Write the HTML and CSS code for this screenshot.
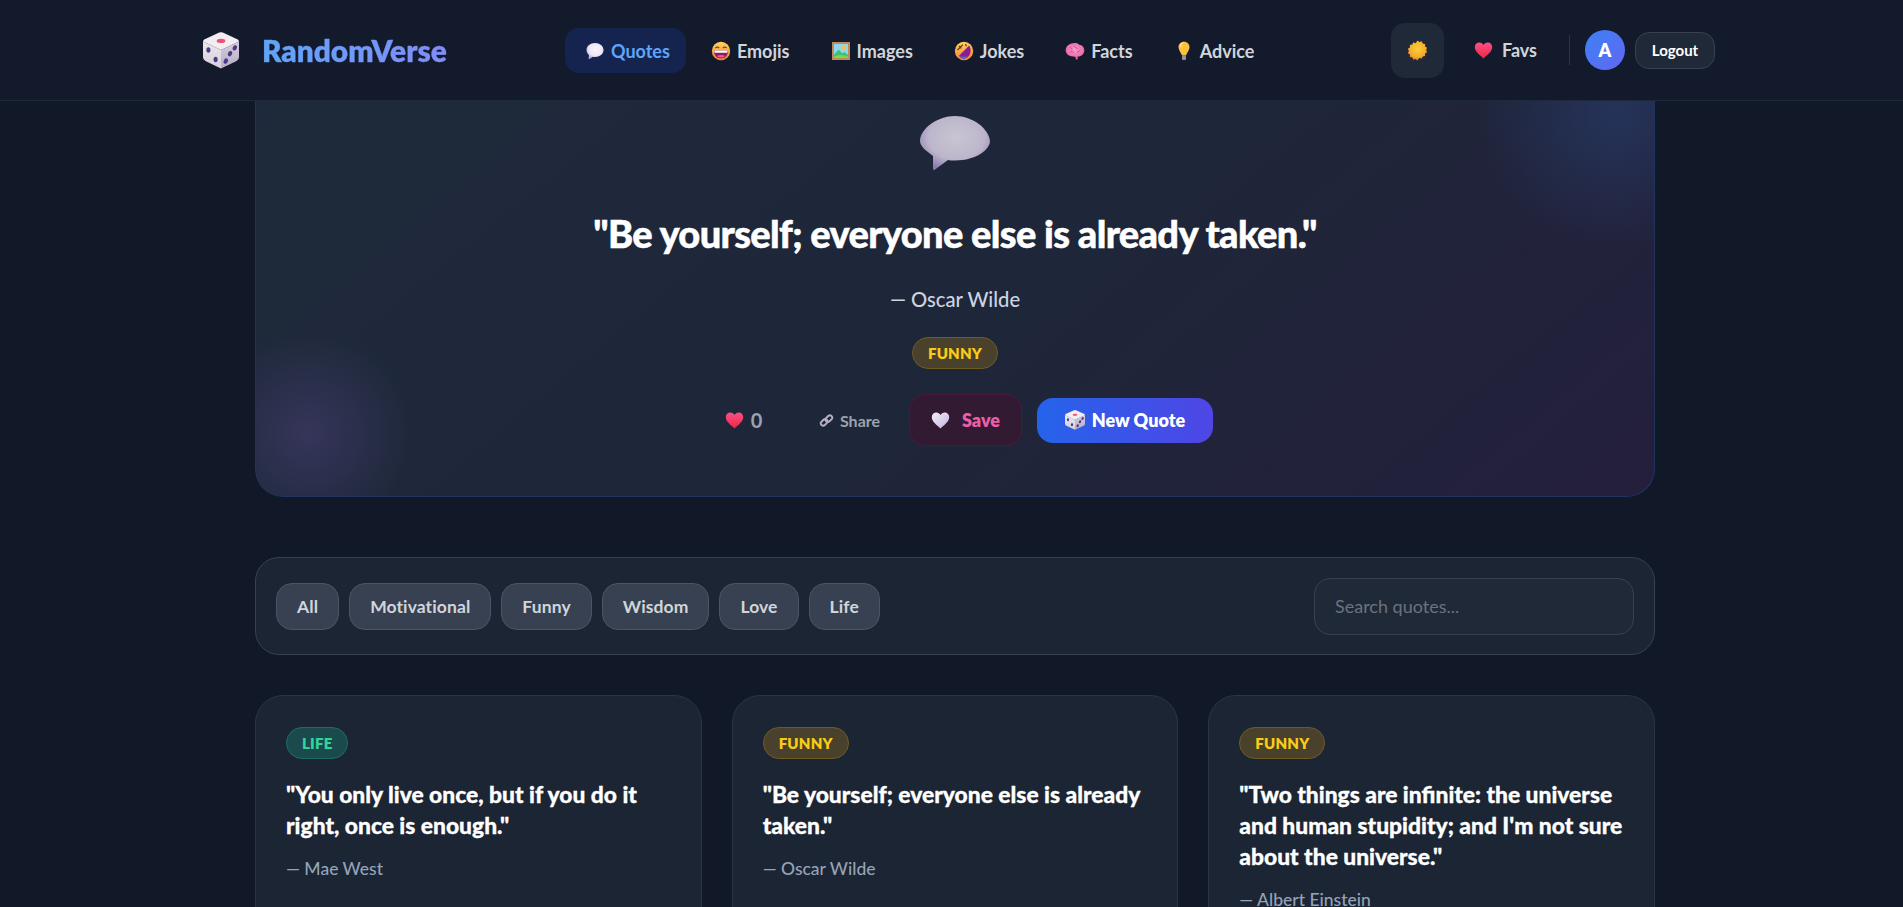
FILE: index.html
```html
<!DOCTYPE html>
<html lang="en">
<head>
<meta charset="utf-8">
<title>RandomVerse</title>
<link rel="stylesheet" href="styles.css">
</head>
<body>
<svg class="defs" width="0" height="0" aria-hidden="true">
  <defs>
    <linearGradient id="gHeart" x1="0" y1="0" x2="0" y2="1"><stop offset="0" stop-color="#f8508a"/><stop offset="1" stop-color="#f0263f"/></linearGradient>
    <linearGradient id="gHeartW" x1="0" y1="0" x2="1" y2="1"><stop offset="0" stop-color="#f3eef6"/><stop offset="1" stop-color="#c4b3e4"/></linearGradient>
    <radialGradient id="gBubble" cx=".52" cy=".4" r=".62"><stop offset="0" stop-color="#c9c5d2"/><stop offset=".65" stop-color="#bdb6cb"/><stop offset="1" stop-color="#8d7bb0"/></radialGradient>
    <radialGradient id="gBubbleS" cx=".55" cy=".4" r=".6"><stop offset="0" stop-color="#f7f3fb"/><stop offset=".7" stop-color="#ece6f4"/><stop offset="1" stop-color="#b9a6dc"/></radialGradient>
    <linearGradient id="gFace" x1="0" y1="0" x2="0" y2="1"><stop offset="0" stop-color="#ffd35a"/><stop offset="1" stop-color="#f5803a"/></linearGradient>
    <radialGradient id="gSun" cx=".5" cy=".4" r=".55"><stop offset="0" stop-color="#fbcf3a"/><stop offset=".8" stop-color="#f3ab2b"/><stop offset="1" stop-color="#ea8228"/></radialGradient>
    <radialGradient id="gBrain" cx=".5" cy=".4" r=".6"><stop offset="0" stop-color="#f79ac6"/><stop offset="1" stop-color="#e860a4"/></radialGradient>
    <linearGradient id="gDieL" x1="0" y1="0" x2="0" y2="1"><stop offset="0" stop-color="#ece7ec"/><stop offset="1" stop-color="#d6cfdc"/></linearGradient>
    <linearGradient id="gDieR" x1="0" y1="0" x2="0" y2="1"><stop offset="0" stop-color="#d6cede"/><stop offset="1" stop-color="#b7abc8"/></linearGradient>
    <symbol id="iHeart" viewBox="0 0 24 24"><path d="M12 22C7 17.500 1 13.500 1 8c0-3.500 2.600-6 5.700-6C9 2 11 3.200 12 5c1-1.800 3-3 5.300-3C20.400 2 23 4.500 23 8c0 5.500-6 9.500-11 14z" fill="url(#gHeart)"/></symbol>
    <symbol id="iHeartW" viewBox="0 0 24 24"><path d="M12 22C7 17.500 1 13.500 1 8c0-3.500 2.600-6 5.700-6C9 2 11 3.200 12 5c1-1.800 3-3 5.300-3C20.400 2 23 4.500 23 8c0 5.500-6 9.500-11 14z" fill="url(#gHeartW)"/></symbol>
    <symbol id="iDie" viewBox="3 1 30 35" preserveAspectRatio="none">
      <path d="M16.500 1.500Q18 .8 19.500 1.500L32 8Q33 8.800 33 10L18 18 3 10Q3 8.800 4 8z" fill="#f1edf0"/>
      <path d="M3 10 18 18V35.500L5 28.500Q3 27.500 3 25z" fill="url(#gDieL)"/>
      <path d="M33 10 18 18V35.500L31 28.500Q33 27.500 33 25z" fill="url(#gDieR)"/>
      <ellipse cx="18" cy="9.500" rx="3.600" ry="2" fill="#f0527a"/>
      <ellipse cx="7.500" cy="18" rx="1.700" ry="2.600" fill="#4b3a86"/>
      <ellipse cx="13.500" cy="27" rx="1.700" ry="2.600" fill="#4b3a86"/>
      <ellipse cx="29.500" cy="16" rx="1.700" ry="2.600" transform="rotate(18 29.500 16)" fill="#4b3a86"/>
      <ellipse cx="25.500" cy="21.500" rx="1.700" ry="2.600" transform="rotate(18 25.500 21.500)" fill="#4b3a86"/>
      <ellipse cx="22" cy="28.500" rx="1.700" ry="2.600" transform="rotate(18 22 28.500)" fill="#4b3a86"/>
    </symbol>
    <symbol id="iBubble" viewBox="0 0 72 56"><path d="M36 1C54 1 70 14 71 26 71 34 58 45.500 36 45.500 33 45.500 31 45.500 29 45L16 54.500Q14 56 14 53V41C6 35 1 31 1 26 1 14 18 1 36 1z" fill="url(#gBubble)"/></symbol>
    <symbol id="iBubbleS" viewBox="0 0 20 20"><path d="M10 2c4.800 0 8.500 3 8.500 7s-3.700 7-8.500 7c-.8 0-1.500-.1-2.200-.3L4.500 18c-.6.3-1-.1-.9-.7l.4-3.100C2.500 12.800 1.500 11 1.500 9c0-4 3.700-7 8.500-7z" fill="url(#gBubbleS)"/></symbol>
  </defs>
</svg>

<header class="topbar">
  <a class="brand">
    <svg class="brand-die"><use href="#iDie"/></svg>
    <span class="brand-name">RandomVerse</span>
  </a>
  <nav class="nav">
    <a class="nav-item is-active"><svg class="ico"><use href="#iBubbleS"/></svg>Quotes</a>
    <a class="nav-item"><svg class="ico" viewBox="0 0 20 20"><circle cx="10" cy="10" r="9.200" fill="url(#gFace)"/><path d="M3 9.500h14c.3 4.500-2.800 8-7 8s-7.300-3.500-7-8z" fill="#8f1d5e"/><path d="M3.200 9.500h13.600l-.4 2.300H3.600z" fill="#fff"/><path d="M6 15c2.300-1.500 5.700-1.500 8 0-2.300 2-5.700 2-8 0z" fill="#f45a8e"/><path d="M4.500 7q1.800-2 3.500 0M12 7q1.800-2 3.500 0" stroke="#5d3a1a" stroke-width="1.200" fill="none"/></svg>Emojis</a>
    <a class="nav-item"><svg class="ico" viewBox="0 0 20 20"><rect x="1" y="1" width="18" height="18" fill="#c28a5a"/><rect x="3" y="3" width="14" height="14" fill="#8fd6ee"/><circle cx="12.500" cy="6.500" r="2" fill="#fbc24a"/><path d="M3 14 7.500 8.500l3.800 4 2.200-1.500 3.500 3v3H3z" fill="#3fbf72"/><path d="M3 17v-1.500q6-3 14 0V17z" fill="#79d94f"/></svg>Images</a>
    <a class="nav-item"><svg class="ico" viewBox="0 0 20 20"><circle cx="10" cy="10" r="9.200" fill="url(#gFace)"/><path d="M5 14.800 15.200 4.500c2.300 3.800 1.800 8.800-1.500 11.600S7.300 18.300 5 14.800z" fill="#8a1f8f"/><path d="M14 15.800 5.600 15.600C7.800 18.400 11.500 18.500 14 15.800z" fill="#3b6fe0"/><path d="M3.500 9 8.800 3.800M5 5l2.300 2.300M11.500 3l1 2.300" stroke="#5d3a1a" stroke-width="1.200" fill="none"/></svg>Jokes</a>
    <a class="nav-item"><svg class="ico" viewBox="0 0 20 20"><path d="M10 2c2 0 3.300.7 4.300 1.700 2.800.3 5 2.600 5 5.500 0 3.500-2.700 6.100-6.300 6.400l-.5.100.3 2.600-1.800.2-.6-2.800C4 15.700.7 13.100.7 9.300.7 5 4.600 2 10 2z" fill="url(#gBrain)"/><path d="M5 6q2 1 2 3M9 4.500q1 3 4 3M5 11q3-1 4 1M12 11q2 0 3-2" stroke="#d04c8e" stroke-width=".9" fill="none"/></svg>Facts</a>
    <a class="nav-item"><svg class="ico" viewBox="0 0 20 20"><path d="M10 .8c3.400 0 5.500 2.500 5.500 5.400 0 2.900-2.600 5.400-3.500 8.300H8c-.9-2.900-3.500-5.400-3.500-8.300C4.500 3.300 6.600.8 10 .8z" fill="#fbc13e"/><path d="M9.500 1.500c-2 .6-3 2.600-2.500 5" stroke="#ffe69a" stroke-width="1.200" fill="none"/><rect x="8" y="14.500" width="4" height="4.500" rx="1" fill="#9a8fa8"/></svg>Advice</a>
  </nav>
  <div class="tools">
    <button class="theme-btn" type="button"><svg class="ico-sun" viewBox="0 0 20 20"><path d="M10 .5l1.800 1.500 2.200-.8 1 2.200 2.300.3-.1 2.400 2 1.200-1 2.200 1 2.200-2 1.200.1 2.400-2.300.3-1 2.200-2.200-.8L10 19.500l-1.800-1.500-2.200.8-1-2.200-2.300-.3.1-2.400-2-1.200 1-2.200-1-2.200 2-1.200-.1-2.400 2.300-.3 1-2.200 2.200.8z" fill="url(#gSun)"/></svg></button>
    <a class="favs"><svg class="ico-heart"><use href="#iHeart"/></svg>Favs</a>
    <span class="sep"></span>
    <span class="avatar">A</span>
    <button class="logout" type="button">Logout</button>
  </div>
</header>

<main class="page">
  <section class="hero">
    <svg class="hero-bubble"><use href="#iBubble"/></svg>
    <h1 class="hero-quote">"Be yourself; everyone else is already taken."</h1>
    <p class="hero-author">— Oscar Wilde</p>
    <span class="tag tag-funny hero-tag">FUNNY</span>
    <div class="hero-actions">
      <button class="act-like" type="button"><svg class="ico-heart"><use href="#iHeart"/></svg>0</button>
      <button class="act-share" type="button"><svg class="ico-link" viewBox="0 0 16 16"><g fill="none" stroke="#b6afc4" stroke-width="2"><rect x="1.500" y="7.500" width="8" height="5" rx="2.500" transform="rotate(-45 5.500 10)"/><rect x="6.500" y="3.500" width="8" height="5" rx="2.500" transform="rotate(-45 10.500 6)"/></g></svg>Share</button>
      <button class="act-save" type="button"><svg class="ico-save"><use href="#iHeartW"/></svg>Save</button>
      <button class="act-new" type="button"><svg class="ico"><use href="#iDie"/></svg>New Quote</button>
    </div>
  </section>

  <section class="filters">
    <div class="chips">
      <button class="chip" type="button">All</button>
      <button class="chip" type="button">Motivational</button>
      <button class="chip" type="button">Funny</button>
      <button class="chip" type="button">Wisdom</button>
      <button class="chip" type="button">Love</button>
      <button class="chip" type="button">Life</button>
    </div>
    <input class="search" type="text" placeholder="Search quotes...">
  </section>

  <section class="grid">
    <article class="card">
      <span class="tag tag-life">LIFE</span>
      <h2 class="card-quote">"You only live once, but if you do it right, once is enough."</h2>
      <p class="card-author">— Mae West</p>
    </article>
    <article class="card">
      <span class="tag tag-funny">FUNNY</span>
      <h2 class="card-quote">"Be yourself; everyone else is already taken."</h2>
      <p class="card-author">— Oscar Wilde</p>
    </article>
    <article class="card">
      <span class="tag tag-funny">FUNNY</span>
      <h2 class="card-quote">"Two things are infinite: the universe and human stupidity; and I'm not sure about the universe."</h2>
      <p class="card-author">— Albert Einstein</p>
    </article>
  </section>
</main>
</body>
</html>
```
FILE: styles.css
```css
* { box-sizing: border-box; }
html { height: 907px; overflow: hidden; }
body {
  margin: 0;
  height: 907px;
  overflow: hidden;
  background: #111827;
  color: #fff;
  font-family: "Lato", "Inter", sans-serif;
}
.defs { position: absolute; }
h1, h2, p { margin: 0; }
button, input { font-family: inherit; }
button { cursor: pointer; }

.topbar {
  height: 101px;
  padding: 0 188px 0 203px;
  display: flex;
  align-items: center;
  background: #131a2b;
  border-bottom: 1px solid #1e293b;
}
.brand { display: flex; align-items: center; gap: 23px; width: 362px; }
.brand-die { width: 36px; height: 37px; }
.brand-name {
  font-size: 29.800px;
  font-weight: 800;
  -webkit-text-stroke: .3px transparent;
  background: linear-gradient(90deg, #60a5fa, #818cf8);
  -webkit-background-clip: text;
  background-clip: text;
  color: transparent;
}
.nav { display: flex; align-items: center; gap: 3px; }
.nav-item {
  height: 45px;
  padding: 1px 18px 0 20px;
  display: flex;
  align-items: center;
  gap: 6px;
  border-radius: 14px;
  font-size: 18px;
  font-weight: 700;
  color: #d1d5db;
}
.nav-item.is-active { background: #15244f; color: #60a5fa; padding-right: 16px; margin-right: 2px; }
.ico { width: 20px; height: 20px; flex: none; }

.tools { margin-left: auto; display: flex; align-items: center; }
.theme-btn {
  width: 53px;
  height: 55px;
  border: 0;
  border-radius: 14px;
  background: #1f2937;
  display: flex;
  align-items: center;
  justify-content: center;
}
.ico-sun { width: 21px; height: 21px; }
.favs {
  margin-left: 30px;
  display: flex;
  align-items: center;
  gap: 9px;
  font-size: 18px;
  font-weight: 700;
  color: #d1d5db;
}
.ico-heart { width: 19px; height: 19px; flex: none; }
.sep { width: 1px; height: 30px; background: #2c3646; margin: 0 15px 0 32px; }
.avatar {
  width: 40px;
  height: 40px;
  border-radius: 50%;
  background: linear-gradient(135deg, #3b82f6, #6366f1);
  display: flex;
  align-items: center;
  justify-content: center;
  font-weight: 800;
  font-size: 18px;
}
.logout {
  margin-left: 10px;
  width: 80px;
  height: 37px;
  border: 1px solid #374151;
  border-radius: 14px;
  background: #1f2937;
  color: #fff;
  font-size: 15px;
  font-weight: 700;
}

.page { width: 1400px; margin-left: 255px; }
.hero {
  height: 396px;
  padding-top: 14px;
  display: flex;
  flex-direction: column;
  align-items: center;
  border: 1px solid #1f3560;
  border-top: 0;
  border-radius: 0 0 28px 28px;
  background:
    radial-gradient(circle 105px at 52px 333px, rgba(168, 120, 247, .17), transparent),
    radial-gradient(circle 140px at 1360px 10px, rgba(59, 130, 246, .17), transparent),
    linear-gradient(140deg, #1e2a3b 0%, #1e2639 55%, #241f3c 100%);
}
.hero-bubble { width: 72px; height: 56px; flex: none; }
.hero-quote {
  margin-top: 36px;
  font-size: 38px;
  line-height: 52px;
  font-weight: 900;
  letter-spacing: -.65px;
  -webkit-text-stroke: .5px #fff;
}
.hero-author {
  margin-top: 27px;
  font-size: 20.200px;
  line-height: 26px;
  font-weight: 500;
  color: #cbd5e1;
}
.hero-tag { margin-top: 25px; }
.tag {
  display: inline-block;
  padding: 0 15px;
  height: 32px;
  line-height: 30px;
  border-radius: 16px;
  border: 1px solid;
  font-size: 15px;
  font-weight: 800;
  letter-spacing: .2px;
}
.tag-funny { color: #facc15; background: #4a412d; border-color: #6e5b22; }
.tag-life { color: #34d399; background: #1b4a4c; border-color: #1e6e5e; }

.hero-actions { margin-top: 25px; display: flex; align-items: center; }
.hero-actions button { display: flex; align-items: center; justify-content: center; }
.act-like {
  width: 93px;
  height: 45px;
  gap: 7px;
  border: 0;
  background: none;
  color: #9ca3af;
  font-size: 20px;
  font-weight: 700;
}
.act-share {
  margin-left: 9px;
  width: 101px;
  height: 45px;
  gap: 6px;
  border: 0;
  background: none;
  color: #9ca3af;
  font-size: 16px;
  font-weight: 700;
}
.ico-link { width: 15px; height: 15px; }
.act-save {
  margin-left: 9px;
  width: 113px;
  height: 52px;
  gap: 12px;
  border: 1px solid #4a1a3c;
  border-radius: 16px;
  background: #331a33;
  color: #ec5fa8;
  font-size: 18px;
  font-weight: 800;
}
.ico-save { width: 19px; height: 19px; }
.act-new {
  margin-left: 15px;
  width: 176px;
  height: 45px;
  gap: 7px;
  border: 0;
  border-radius: 16px;
  background: linear-gradient(90deg, #2563eb, #4f46e5);
  color: #fff;
  font-size: 18px;
  font-weight: 800;
}

.filters {
  margin-top: 60px;
  height: 98px;
  padding: 0 20px;
  display: flex;
  align-items: center;
  justify-content: space-between;
  border: 1px solid #374151;
  border-radius: 24px;
  background: #1c2533;
}
.chips { display: flex; gap: 10px; }
.chip {
  height: 47px;
  padding: 0 20px;
  border: 1px solid #4b5563;
  border-radius: 16px;
  background: #374151;
  color: #d1d5db;
  font-size: 17.500px;
  font-weight: 700;
  letter-spacing: .1px;
}
.search {
  width: 320px;
  height: 57px;
  padding: 0 20px;
  border: 1px solid #374151;
  border-radius: 16px;
  background: #1f2937;
  color: #fff;
  font-size: 18px;
  outline: none;
}
.search::placeholder { color: #6b7280; }

.grid {
  margin-top: 40px;
  display: grid;
  grid-template-columns: repeat(3, 1fr);
  gap: 30px;
}
.card {
  min-height: 320px;
  padding: 31px 30px;
  border: 1px solid #2a3547;
  border-radius: 28px;
  background: #1c2533;
}
.card-quote {
  margin-top: 20px;
  font-size: 22.800px;
  line-height: 31px;
  font-weight: 900;
  -webkit-text-stroke: .3px #fff;
}
.card-author {
  margin-top: 17px;
  font-size: 17.500px;
  line-height: 22px;
  font-weight: 500;
  color: #94a3b8;
}
```
